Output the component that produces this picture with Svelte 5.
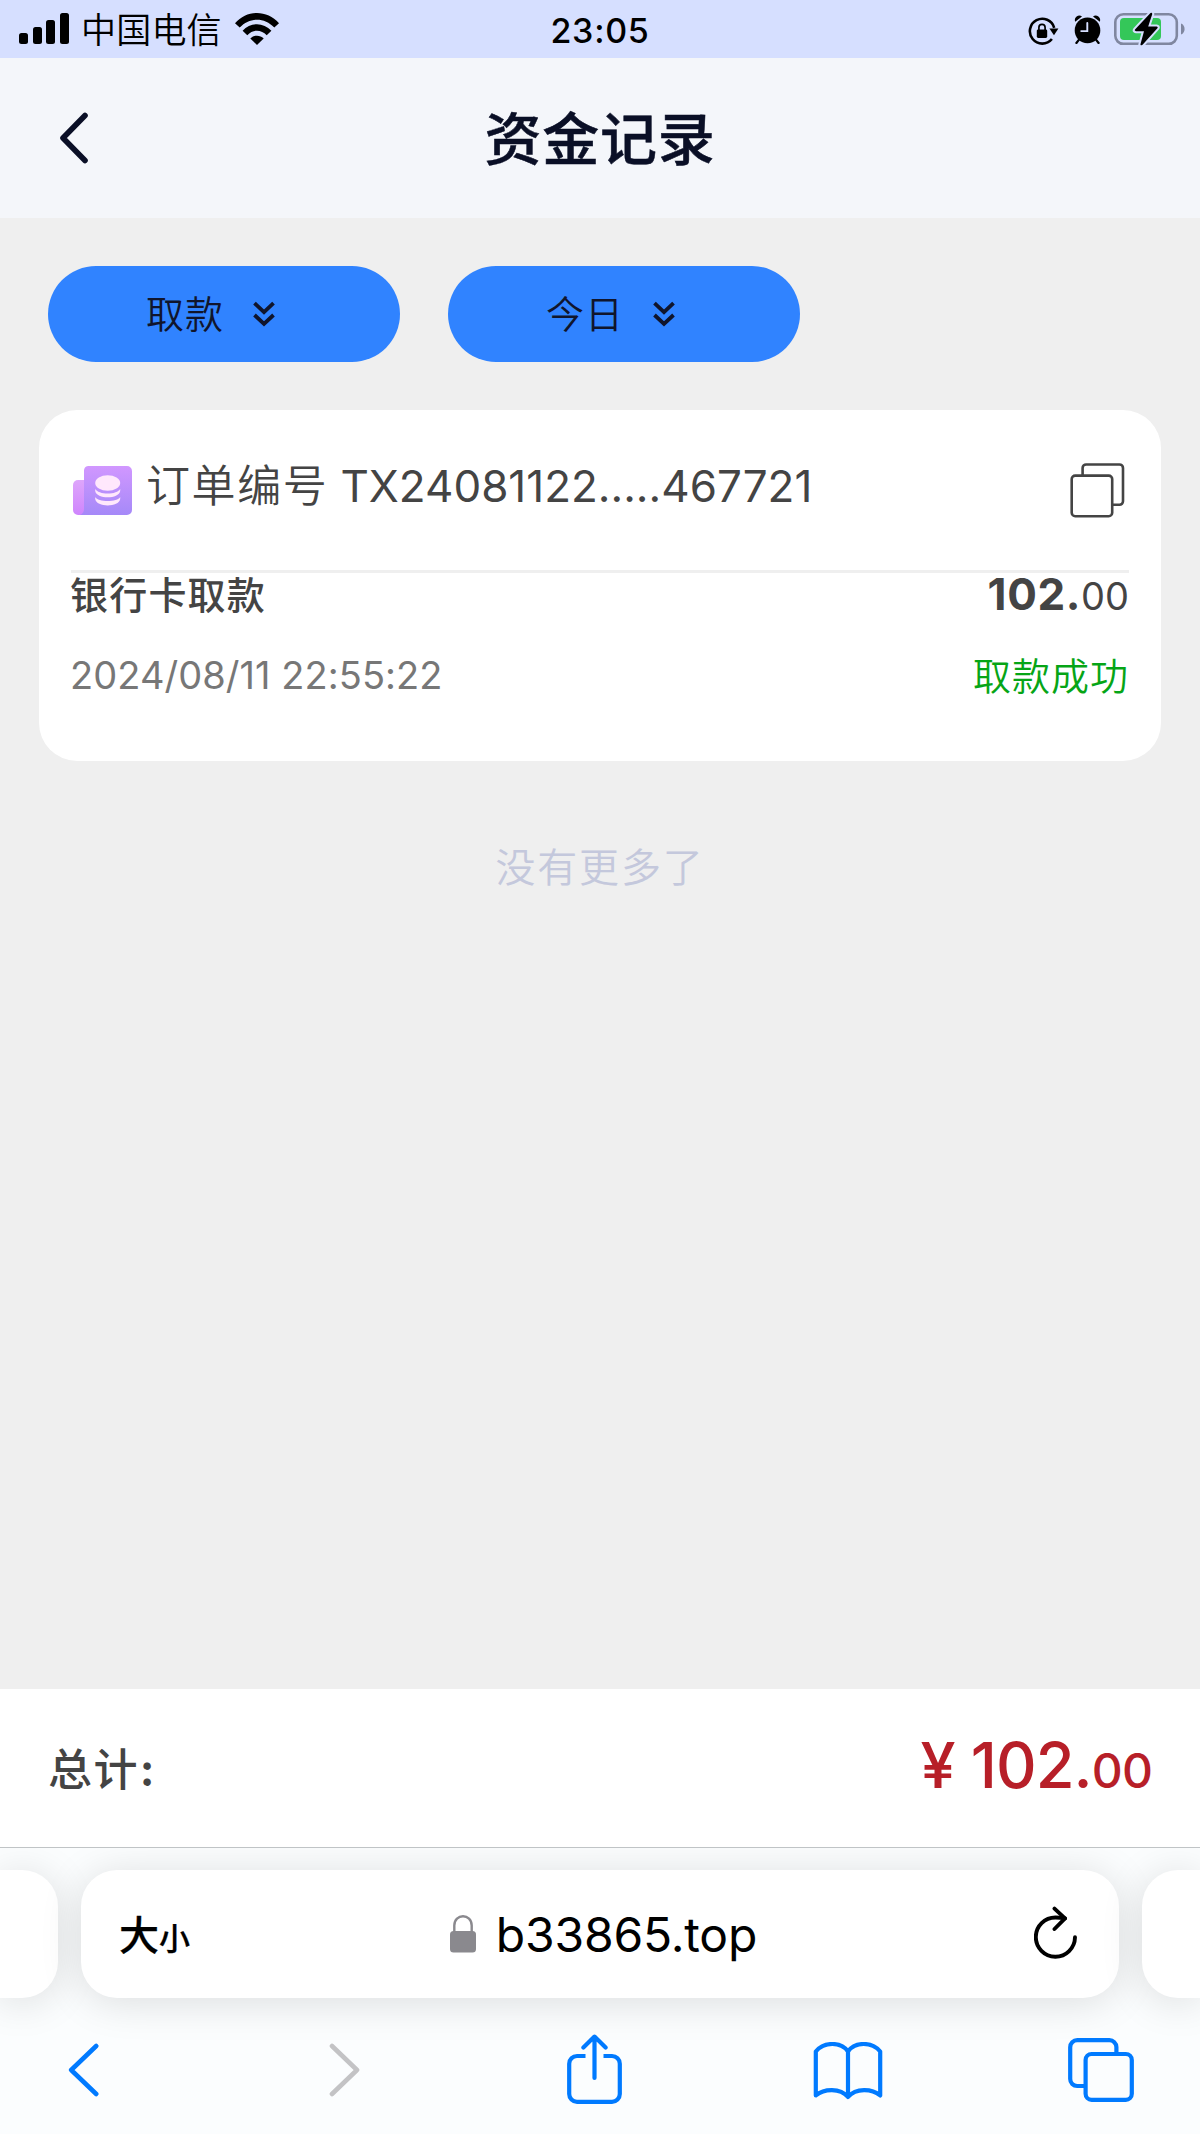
<script lang="ts">
	const carrier = '中国电信';
	const time = '23:05';
	const filters = ['取款', '今日'];

	const record = {
		order: 'TX24081122.....467721',
		type: '银行卡取款',
		amount: ['102.', '00'],
		date: '2024/08/11 22:55:22',
		status: '取款成功'
	};

	const total = ['102.', '00'];
	const host = 'b33865.top';
</script>

<div class="screen">
	<div class="status-bar">
		<div class="status-left">
			<svg width="50" height="31" viewBox="0 0 50 31">
				<rect x="0" y="20" width="9" height="11" rx="2.5" />
				<rect x="14" y="14" width="9" height="17" rx="2.5" />
				<rect x="27" y="7" width="9" height="24" rx="2.5" />
				<rect x="41" y="0" width="9" height="31" rx="2.5" />
			</svg>
			<span class="carrier">{carrier}</span>
			<svg class="wifi" width="44" height="32" viewBox="0 0 44 32">
				<path d="M0 10.2C12-3.4 32-3.4 44 10.2L39.3 14.6C29.5 4 14.5 4 4.7 14.6Z" />
				<path d="M7.6 17.7C15.5 9 28.5 9 36.4 17.7L31.7 22.2C26.2 16.2 17.8 16.2 12.3 22.2Z" />
				<path d="M15.3 25.4C19 21.7 25 21.7 28.7 25.4L22 32Z" />
			</svg>
		</div>
		<span class="time">{time}</span>
		<div class="status-right">
			<svg width="31" height="28" viewBox="0 0 31 28">
				<path d="M26.2 10.8A12.4 12.4 0 1 0 23.9 22" fill="none" stroke="#000" stroke-width="2.6" />
				<path d="M21.4 11.5H30.4L26 18.2Z" />
				<rect x="8.8" y="12.4" width="10.4" height="8.6" rx="1.4" />
				<path d="M10.9 13V10.4a3.1 3.1 0 0 1 6.2 0V13" fill="none" stroke="#000" stroke-width="1.7" />
			</svg>
			<svg class="alarm" width="27" height="29" viewBox="0 0 27 29">
				<circle cx="13.5" cy="15.4" r="12.8" />
				<path d="M1.2 6.7A4.5 4.5 0 0 1 8 1.4ZM25.8 6.7A4.5 4.5 0 0 0 19 1.4Z" />
				<path d="M5.2 24.4 2.4 28M21.8 24.4 24.6 28" stroke="#000" stroke-width="2.2" stroke-linecap="round" />
				<path d="M13.3 8V16.1H7.2" fill="none" stroke="#d6dfff" stroke-width="1.9" stroke-linecap="round" />
			</svg>
			<svg class="battery" width="71" height="34" viewBox="0 0 71 34">
				<rect x="1.3" y="2.3" width="61.5" height="29.5" rx="8" fill="none" stroke="#8087a0" stroke-width="2.6" />
				<rect x="6" y="6" width="41" height="22" rx="4" fill="#34c759" />
				<path d="M67 11.5C71.8 13 71.8 21 67 22.5Z" fill="#8087a0" />
				<path
					d="M36.5 1 21 17.6Q20 19 22 19.2H30L26.4 32.4Q27.2 34 28.8 32.6L43.6 16Q44.2 14.6 42.6 14.4H34.2L38.3 2Q38 .2 36.5 1Z"
					stroke="#d6dfff"
					stroke-width="4"
					paint-order="stroke"
				/>
			</svg>
		</div>
	</div>

	<header class="nav">
		<svg width="28" height="52" viewBox="0 0 28 52">
			<path d="M25 3.5 3 26 25 48.5" fill="none" stroke="#0a0f26" stroke-width="5.6" stroke-linecap="round" stroke-linejoin="round" />
		</svg>
		<h1>资金记录</h1>
	</header>

	<main>
		<div class="filters">
			{#each filters as filter}
				<button class="filter">
					<span>{filter}</span>
					<svg width="22" height="26" viewBox="0 0 22 26">
						<path d="M1.5 2.2 11 11.2 20.5 2.2M1.5 14 11 23 20.5 14" fill="none" stroke="#10152c" stroke-width="3.8" />
					</svg>
				</button>
			{/each}
		</div>

		<section class="card">
			<div class="card-head">
				<svg width="59" height="49" viewBox="0 0 59 49">
					<defs>
						<linearGradient id="front" x1="0" y1="0" x2="0" y2="1">
							<stop offset="0" stop-color="#d197ff" />
							<stop offset="1" stop-color="#a589f8" />
						</linearGradient>
						<linearGradient id="back" x1="0" y1="0" x2="0" y2="1">
							<stop offset="0" stop-color="#dea6fb" />
							<stop offset="1" stop-color="#cf85fd" />
						</linearGradient>
					</defs>
					<path d="M15 0H54a5 5 0 0 1 5 5V44a5 5 0 0 1-5 5H6V44L11 40V5A5 5 0 0 1 15 0Z" fill="url(#front)" />
					<path d="M5 14H11V43Q11 47 7 49H5A5 5 0 0 1 0 44V19A5 5 0 0 1 5 14Z" fill="url(#back)" />
					<g fill="#ffe8fc">
						<ellipse cx="34.7" cy="17" rx="12.5" ry="7.8" />
						<path d="M22.2 22.8C25 29.2 44.4 29.2 47.2 22.8V25C46 33.4 23.4 33.4 22.2 25Z" />
						<path d="M22.2 31C25 36.4 44.4 36.4 47.2 31V33C46 41.6 23.4 41.6 22.2 33Z" />
					</g>
				</svg>
				<span class="order"><span class="order-label">订单编号</span><span class="order-no">{record.order}</span></span>
				<svg class="copy" width="55" height="55" viewBox="0 0 55 55" fill="none" stroke="#444" stroke-width="2.6">
					<rect x="1.7" y="12.6" width="40.5" height="40.6" rx="3.5" />
					<path d="M12.6 12.6V5a3.5 3.5 0 0 1 3.5-3.5H49.5A3.5 3.5 0 0 1 53 5V38.3a3.5 3.5 0 0 1-3.5 3.5H42.2" />
				</svg>
			</div>
			<div class="row">
				<strong class="type">{record.type}</strong>
				<span class="amount"><b>{record.amount[0]}</b>{record.amount[1]}</span>
			</div>
			<div class="row detail">
				<span class="date">{record.date}</span>
				<span class="done">{record.status}</span>
			</div>
		</section>

		<p class="no-more">没有更多了</p>
	</main>

	<footer class="total">
		<span class="total-label">总计<i>:</i></span>
		<span class="total-value"><span class="yen">¥</span>{total[0]}<small>{total[1]}</small></span>
	</footer>

	<div class="browser">
		<div class="tabs">
			<div class="tab side"></div>
			<div class="tab address">
				<span class="text-size">大<small>小</small></span>
				<div class="host">
					<svg width="26" height="38" viewBox="0 0 26 38">
						<rect x="0" y="16" width="26" height="21.5" rx="3.5" fill="#8a898e" />
						<path d="M4.3 17V10.5C4.3-1.8 21.7-1.8 21.7 10.5V17" fill="none" stroke="#8a898e" stroke-width="2.4" />
					</svg>
					<span>{host}</span>
				</div>
				<svg width="44" height="54" viewBox="0 0 44 54" fill="none" stroke="#000" stroke-width="3.9" stroke-linecap="round" stroke-linejoin="round">
					<path d="M41 31.3A19.6 19.6 0 1 1 21.5 11.5Q26 11.5 31 12.4" />
					<path d="M20.5 2.6 31 12.4 20.5 23" />
				</svg>
			</div>
			<div class="tab side"></div>
		</div>

		<div class="toolbar">
			<svg width="32" height="54" viewBox="0 0 32 54" fill="none" stroke="#007aff" stroke-width="4.6">
				<path d="M28.2 3 3.2 27 28.2 51" />
			</svg>
			<svg width="32" height="54" viewBox="0 0 32 54" fill="none" stroke="#c3c3c5" stroke-width="4.6">
				<path d="M3 3 28 27 3 51" />
			</svg>
			<svg class="share" width="55" height="70" viewBox="0 0 55 70" fill="none" stroke="#007aff" stroke-width="4.2">
				<path class="butt" d="M18.5 22H10A7.8 7.8 0 0 0 2.2 29.8V60A7.8 7.8 0 0 0 10 67.8H45A7.8 7.8 0 0 0 52.8 60V29.8A7.8 7.8 0 0 0 45 22H36.5" />
				<path d="M27.5 44V3M16.4 13.5 27.5 2.6 38.6 13.5" />
			</svg>
			<svg class="book" width="70" height="58" viewBox="0 0 70 58" fill="none" stroke="#007aff" stroke-width="4.2">
				<path d="M35 9.5C28-.5 11-.5 2.8 9.5V53.5C11 46.5 27 45.5 35 55C43 45.5 59 46.5 67.2 53.5V9.5C59-.5 42-.5 35 9.5ZM35 9.5V55" />
			</svg>
			<svg width="66" height="64" viewBox="0 0 66 64" fill="none" stroke="#007aff" stroke-width="4.2">
				<rect x="17.6" y="16" width="46.2" height="45.8" rx="6" />
				<path class="butt" d="M48.4 15V9A7 7 0 0 0 41.4 2.2H9.2A7 7 0 0 0 2.2 9.2V41A7 7 0 0 0 9.2 48H16" />
			</svg>
		</div>
	</div>
</div>

<style>
	:global(body) {
		background: #efefef;
	}

	.screen {
		display: flex;
		flex-direction: column;
		width: 1200px;
		height: 2134px;
		overflow: hidden;
		background: #efefef;
		color: #444;
		font-family: Inter, 'Noto Sans CJK SC', sans-serif;
	}

	svg {
		display: block;
		flex: none;
	}

	.status-bar {
		display: grid;
		grid-template-columns: 1fr auto 1fr;
		height: 58px;
		background: #d6dfff;
		color: #000;
	}

	.status-left {
		display: flex;
		align-items: flex-start;
		padding: 13px 0 0 19px;
	}

	.carrier {
		margin: -10px 0 0 12px;
		font-size: 35px;
		line-height: 50px;
		font-weight: 350;
		letter-spacing: 0.2px;
		font-family: 'Noto Sans CJK SC', sans-serif;
	}

	.wifi {
		margin-left: 13px;
	}

	.time {
		font-size: 34px;
		font-weight: 550;
		line-height: 61px;
		letter-spacing: 0.7px;
	}

	.status-right {
		display: flex;
		justify-content: flex-end;
		align-items: flex-start;
		padding: 12px 15px 0 0;
	}

	.status-right svg:first-child {
		margin-top: 5px;
	}

	.alarm {
		margin: 3px 13px 0 15px;
	}

	.nav {
		display: grid;
		grid-template-columns: 200px 1fr 200px;
		align-items: center;
		height: 160px;
		background: #f4f6fa;
	}

	.nav svg {
		margin-left: 60px;
	}

	h1 {
		margin: 4px 0 0;
		color: #0a0f26;
		font-size: 57px;
		font-weight: 500;
		line-height: 156px;
		text-align: center;
		letter-spacing: 0.8px;
		-webkit-text-stroke: 0.5px #0a0f26;
	}

	main {
		flex: 1;
		padding: 48px 39px 0;
	}

	.filters {
		display: flex;
		gap: 48px;
		padding: 0 9px;
	}

	.filter {
		display: flex;
		align-items: center;
		gap: 29px;
		width: 352px;
		height: 96px;
		padding: 0 0 1px 98px;
		border: 0;
		border-radius: 48px;
		background: #3083ff;
		color: #10152c;
		font-family: 'Noto Sans CJK SC', sans-serif;
		font-size: 38px;
		font-weight: 350;
		line-height: 92px;
		letter-spacing: 1px;
	}

	.filter span {
		margin-top: -4px;
	}

	.card {
		height: 351px;
		margin-top: 48px;
		padding: 0 32px;
		box-sizing: border-box;
		border-radius: 38px;
		background: #fff;
	}

	.card-head {
		display: flex;
		align-items: center;
		height: 160px;
		padding: 0 4px 0 2px;
		border-bottom: 3px solid #efefef;
	}

	.order {
		flex: 1;
		margin-left: 14px;
		font-size: 44px;
		line-height: 60px;
		margin-top: -8px;
	}

	.order-label {
		margin-right: 12px;
		font-weight: 350;
		letter-spacing: 1.6px;
	}

	.row {
		display: flex;
		justify-content: space-between;
		height: 44px;
		font-size: 38px;
		line-height: 44px;
		letter-spacing: 1px;
	}

	.type {
		margin-left: -1px;
		font-weight: 500;
		letter-spacing: 1.2px;
	}

	.amount {
		margin-top: -1px;
		letter-spacing: 0;
	}

	.amount b {
		font-size: 44px;
		font-weight: 700;
		letter-spacing: 0.6px;
	}

	.detail {
		margin-top: 37px;
	}

	.date {
		margin: -1px 0 0 -1px;
		color: #777;
		letter-spacing: 0.05px;
	}

	.done {
		color: #06a516;
		font-weight: 350;
	}

	.no-more {
		margin: 77px 0 0;
		color: #c4c8dc;
		font-size: 40px;
		font-weight: 350;
		line-height: 60px;
		letter-spacing: 1.8px;
		text-align: center;
	}

	.total {
		display: flex;
		justify-content: space-between;
		align-items: center;
		height: 158px;
		padding: 0 48px 6px;
		box-sizing: border-box;
		background: #fff;
	}

	.total-label {
		margin: 3px 0 0;
		font-size: 44px;
		font-weight: 500;
		letter-spacing: 1.4px;
	}

	.total-label i {
		margin-left: 1px;
		font-style: normal;
		font-weight: 700;
	}

	.total-value {
		color: #b71f28;
		font-size: 63px;
		font-weight: 500;
		letter-spacing: -0.9px;
	}

	.total-value small {
		font-size: 48px;
		letter-spacing: -0.9px;
	}

	.yen {
		margin-right: 16px;
	}

	.browser {
		height: 286px;
		border-top: 1px solid #c0c4c6;
		background: #fbfdfe;
		overflow: hidden;
	}

	.tabs {
		display: flex;
		gap: 23px;
		padding-top: 22px;
	}

	.tab {
		height: 128px;
		border-radius: 36px;
		background: #fff;
		box-shadow: 0 4px 42px rgba(0, 0, 0, 0.13);
	}

	.side {
		flex: none;
		width: 58px;
	}

	.side:first-child {
		border-top-left-radius: 0;
		border-bottom-left-radius: 0;
	}

	.side:last-child {
		border-top-right-radius: 0;
		border-bottom-right-radius: 0;
	}

	.address {
		display: grid;
		grid-template-columns: 200px 1fr 200px;
		align-items: center;
		flex: 1;
		color: #000;
	}

	.address > svg {
		justify-self: end;
		margin: 0 41px 3px 0;
	}

	.text-size {
		margin-top: -3px;
		padding-left: 38px;
		font-family: 'Noto Sans CJK SC', sans-serif;
		font-size: 40px;
		font-weight: 500;
		-webkit-text-stroke: 0.3px #000;
	}

	.text-size small {
		font-size: 31px;
	}

	.host {
		display: flex;
		justify-content: center;
		align-items: center;
		gap: 20px;
		padding-left: 7px;
		font-size: 48px;
		letter-spacing: -0.2px;
	}

	.toolbar {
		display: grid;
		grid-template-columns: 261px 238px 246px 255px auto;
		align-items: center;
		height: 144px;
		padding-left: 68px;
	}

	.toolbar svg {
		stroke-linecap: round;
		stroke-linejoin: round;
	}

	.share {
		margin-bottom: 3px;
	}

	.book {
		margin-top: 2px;
	}

	.toolbar .butt {
		stroke-linecap: butt;
	}
</style>
